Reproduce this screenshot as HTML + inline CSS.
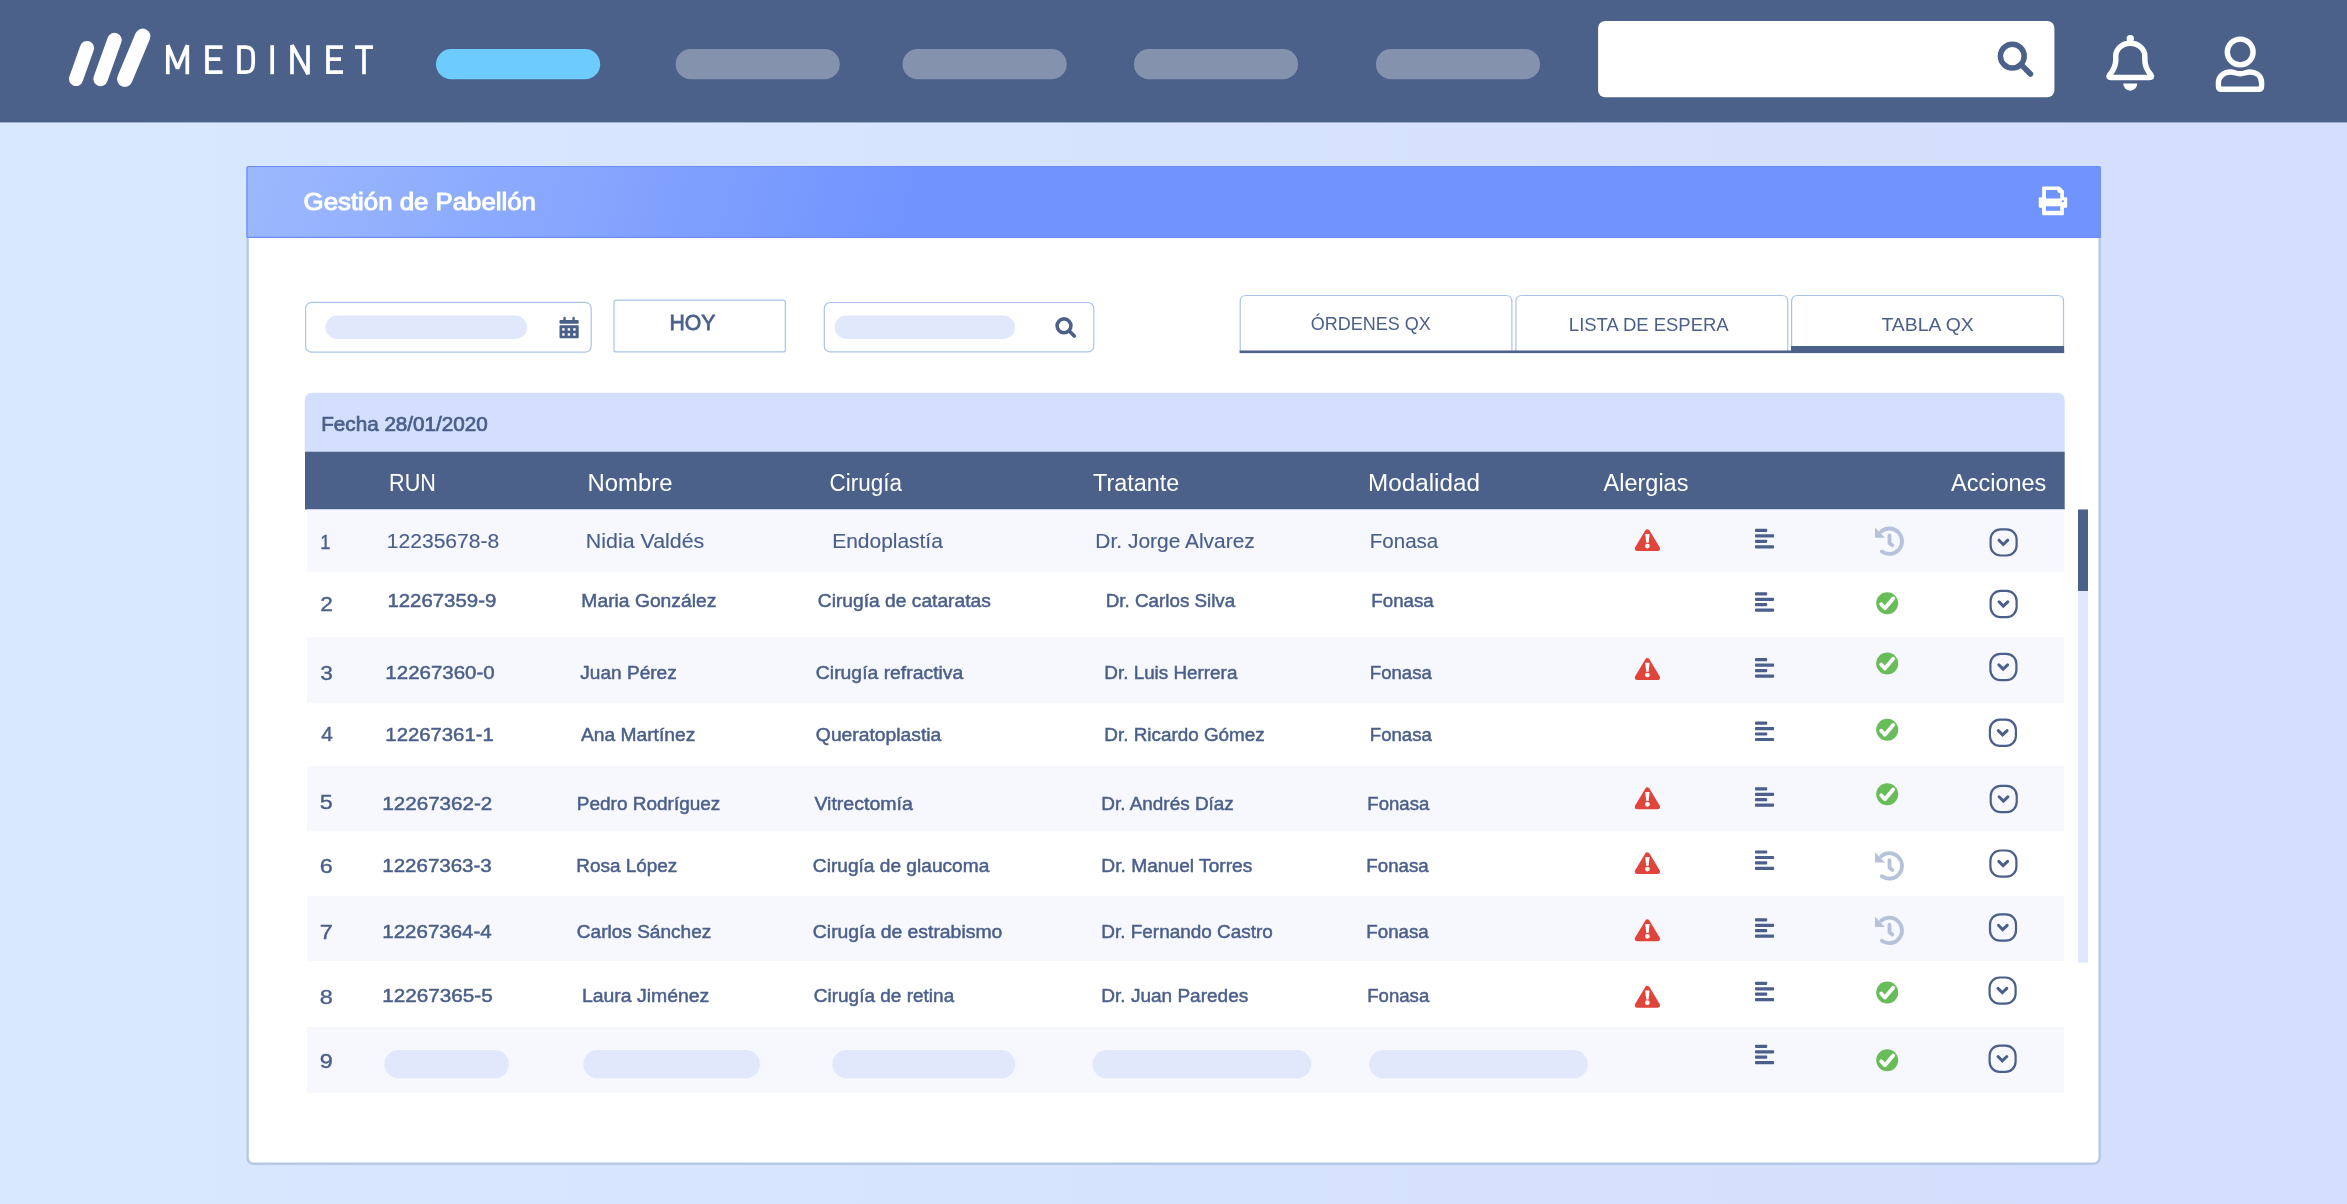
<!DOCTYPE html>
<html><head><meta charset="utf-8"><title>Medinet - Gestión de Pabellón</title>
<style>html,body{margin:0;padding:0;width:2347px;height:1204px;overflow:hidden;background:#d6e3fd;font-family:"Liberation Sans",sans-serif}svg{display:block;will-change:transform}</style>
</head><body>
<svg width="2347" height="1204" viewBox="0 0 2347 1204">
<defs>
<linearGradient id="bg" x1="0" y1="0" x2="1" y2="0">
 <stop offset="0" stop-color="#d8e8fe"/><stop offset="0.3" stop-color="#d7e5fe"/><stop offset="1" stop-color="#d4defd"/>
</linearGradient>
<linearGradient id="ch" gradientUnits="userSpaceOnUse" x1="247" y1="166" x2="880" y2="330">
 <stop offset="0" stop-color="#9cb8fd"/><stop offset="1" stop-color="#7193fe"/>
</linearGradient>
<clipPath id="tbl"><rect x="305" y="509.5" width="1760" height="584"/></clipPath>
</defs>
<rect x="0" y="0" width="2347" height="1204" fill="url(#bg)"/>
<rect x="0" y="0" width="2347" height="122.4" fill="#4b6189"/>
<g stroke="#ffffff" stroke-linecap="round" fill="none"><line x1="76" y1="79" x2="87" y2="48" stroke-width="14.2"/><line x1="100.5" y1="79" x2="114.5" y2="40" stroke-width="14.4"/><line x1="124.8" y1="79" x2="142.7" y2="36.3" stroke-width="15.5"/></g>
<g stroke="#ffffff" stroke-width="3.7" fill="none" stroke-linejoin="miter" stroke-miterlimit="1.5"><path d="M167.8 74.2 V45.2 L177.5 68.5 L187.3 45.2 V74.2"/><path d="M222.5 47.2 H207 V72.2 H222.5 M207 59.2 H220.3"/><path d="M239 47.2 V72.2 H246 C251.5 72.2 253.2 69 253.2 63 V56.5 C253.2 50.5 251.5 47.2 246 47.2 Z"/><path d="M272.2 45.2 V74.2"/><path d="M292 74.2 V45.2 L308 74.2 V45.2"/><path d="M343 47.2 H328 V72.2 H343 M328 59.2 H341"/><path d="M355 47.2 H373 M364 47.2 V74.2"/></g>
<rect x="436" y="49" width="164.2" height="30.3" rx="15.15" fill="#6ecbfd"/>
<rect x="675.6" y="49" width="164.2" height="30.3" rx="15.15" fill="#8492ae"/>
<rect x="902.5" y="49" width="164.2" height="30.3" rx="15.15" fill="#8492ae"/>
<rect x="1133.9" y="49" width="164.2" height="30.3" rx="15.15" fill="#8492ae"/>
<rect x="1375.9" y="49" width="164.2" height="30.3" rx="15.15" fill="#8492ae"/>
<rect x="1598.1" y="21" width="456.3" height="76.2" rx="7" fill="#ffffff"/>
<g stroke="#4b6189" fill="none" stroke-width="5.5" stroke-linecap="round"><circle cx="2012.3" cy="56.1" r="11.9"/><line x1="2022" y1="65.5" x2="2030.5" y2="74"/></g>
<g fill="none" stroke="#ffffff" stroke-width="5.5" stroke-linejoin="round"><path d="M2115.75 56 V60 C2115.75 68 2112 72 2109.5 75 Q2107.8 77.5 2111 77.5 H2149.5 Q2152.8 77.5 2151 75 C2148.5 72 2144.85 68 2144.85 60 V56 A14.55 12.8 0 0 0 2115.75 56 Z"/></g><circle cx="2130.3" cy="38.6" r="3.7" fill="#ffffff"/><path d="M2123.2 83.5 H2137.3 A7.05 7.2 0 0 1 2123.2 83.5 Z" fill="#ffffff"/>
<g fill="none" stroke="#ffffff" stroke-width="5.4" stroke-linejoin="round"><circle cx="2240.2" cy="52" r="12.9"/><path d="M2218.4 86 V83 C2218.4 76 2224 72 2231 72 C2234 72 2236 73.7 2240.2 73.7 C2244.4 73.7 2246.4 72 2249.4 72 C2256.4 72 2261.6 76 2261.6 83 V86 Q2261.6 89.3 2258.3 89.3 H2221.7 Q2218.4 89.3 2218.4 86 Z"/></g>
<rect x="247.65" y="170" width="1852" height="993.8" rx="6" fill="#ffffff" stroke="#b5c9e7" stroke-width="2.4"/>
<path d="M246.5 168 Q246.5 166 248.5 166 H2098.7 Q2100.7 166 2100.7 168 V237.8 H246.5 Z" fill="url(#ch)"/>
<path d="M247 237.3 V168 Q247 166.5 248.5 166.5 H2098.7 Q2100.2 166.5 2100.2 168 V237.3 H247" fill="none" stroke="#6b8cf0" stroke-width="1.2"/>
<g fill="#ffffff"><rect x="2038.8" y="197.3" width="28.4" height="10.5" rx="1"/><path d="M2042.1 199 V187.4 Q2042.1 186.4 2043.1 186.4 H2059.5 L2063.9 190.8 V199 Z"/><rect x="2042.1" y="205" width="21.8" height="10.2" rx="1"/></g><g fill="#7193fe"><path d="M2046 198.6 V189.9 H2057.3 Q2057.3 193 2060.2 193 V198.6 Z"/><rect x="2046" y="206.3" width="14.2" height="4.5"/><rect x="2061.8" y="200.3" width="2" height="1.8"/></g>
<rect x="305.6" y="302.4" width="285.6" height="49.7" rx="6" fill="#ffffff" stroke="#a9c3ea" stroke-width="1.2"/>
<rect x="325.5" y="315.5" width="201.5" height="23.4" rx="11.7" fill="#e2e8fc"/>
<g fill="#4b6189"><rect x="559.5" y="320.1" width="19.2" height="3.6" rx="0.8"/><rect x="559.5" y="325.3" width="19.2" height="13" rx="0.8"/><rect x="563.4" y="316.8" width="2.4" height="5" rx="1.2"/><rect x="572.4" y="316.8" width="2.4" height="5" rx="1.2"/></g>
<g fill="#ffffff"><rect x="562.2" y="328.2" width="2.4" height="2.4"/><rect x="562.2" y="333.3" width="2.4" height="2.4"/><rect x="567.7" y="328.2" width="2.4" height="2.4"/><rect x="567.7" y="333.3" width="2.4" height="2.4"/><rect x="573.2" y="328.2" width="2.4" height="2.4"/><rect x="573.2" y="333.3" width="2.4" height="2.4"/></g>
<rect x="614" y="300.1" width="171.3" height="51.8" rx="2" fill="#ffffff" stroke="#a9c3ea" stroke-width="1.2"/>
<rect x="824.3" y="302.5" width="269.5" height="49.4" rx="6" fill="#ffffff" stroke="#a9c3ea" stroke-width="1.2"/>
<rect x="834.7" y="315.4" width="180.3" height="23.5" rx="11.75" fill="#e2e8fc"/>
<g stroke="#4b6189" fill="none" stroke-width="3.6" stroke-linecap="round"><circle cx="1064.0" cy="325.8" r="6.9"/><line x1="1069.3" y1="331" x2="1074.3" y2="336"/></g>
<path d="M1240.2 352 V301.5 Q1240.2 295.5 1246.2 295.5 H1505.9 Q1511.9 295.5 1511.9 301.5 V352" fill="#ffffff" stroke="#a9c3ea" stroke-width="1.2"/>
<path d="M1515.9 352 V301.5 Q1515.9 295.5 1521.9 295.5 H1781.8 Q1787.8 295.5 1787.8 301.5 V352" fill="#ffffff" stroke="#a9c3ea" stroke-width="1.2"/>
<path d="M1791.6 352 V301.5 Q1791.6 295.5 1797.6 295.5 H2057.5 Q2063.5 295.5 2063.5 301.5 V352" fill="#ffffff" stroke="#a9c3ea" stroke-width="1.2"/>
<rect x="1239.6" y="350.5" width="824.5" height="2.6" fill="#4b6189"/>
<rect x="1791" y="346" width="273.1" height="7" fill="#4b6189"/>
<path d="M304.7 451.7 V400.8 Q304.7 392.8 312.7 392.8 H2056.7 Q2064.7 392.8 2064.7 400.8 V451.7 Z" fill="#d3dffd"/>
<rect x="305" y="451.7" width="1759.7" height="57.8" fill="#4b6189"/>
<rect x="307" y="509.5" width="1757" height="62.3" fill="#f7f8fe"/>
<rect x="307" y="637.2" width="1757" height="66.0" fill="#f7f8fe"/>
<rect x="307" y="766.3" width="1757" height="65.1" fill="#f7f8fe"/>
<rect x="307" y="895.8" width="1757" height="65.2" fill="#f7f8fe"/>
<rect x="307" y="1027.0" width="1757" height="65.8" fill="#f7f8fe"/>
<rect x="384.4" y="1050" width="124.4" height="28.3" rx="14.15" fill="#e2e8fc"/>
<rect x="583.3" y="1050" width="176.6" height="28.3" rx="14.15" fill="#e2e8fc"/>
<rect x="832.4" y="1050" width="182.9" height="28.3" rx="14.15" fill="#e2e8fc"/>
<rect x="1092.5" y="1050" width="218.7" height="28.3" rx="14.15" fill="#e2e8fc"/>
<rect x="1369.1" y="1050" width="218.7" height="28.3" rx="14.15" fill="#e2e8fc"/>
<rect x="2078" y="509.5" width="10" height="453.2" fill="#e2e8fb"/>
<rect x="2078" y="509.5" width="10" height="81.5" fill="#4b6189"/>
<g><path d="M1647.4 531.8 L1657.5 548.6 L1637.3 548.6 Z" fill="#e0443a" stroke="#e0443a" stroke-width="5" stroke-linejoin="round"/><path d="M1645.2 533.9 L1649.6 533.9 L1648.6 542.8 L1646.2 542.8 Z" fill="#ffffff"/><circle cx="1647.4" cy="546.1" r="2.35" fill="#ffffff"/></g>
<g fill="#4a5f8a"><rect x="1755.0" y="528.8" width="12.2" height="3.2" rx="0.8"/><rect x="1755.0" y="534.3" width="19.1" height="3.2" rx="0.8"/><rect x="1755.0" y="539.7" width="12.2" height="3.2" rx="0.8"/><rect x="1755.0" y="545.2" width="19.1" height="3.2" rx="0.8"/></g>
<g fill="none" stroke="#b5c2da" stroke-width="3.8" stroke-linecap="round"><path d="M1881.14 531.47 A12.7 12.7 0 1 1 1881.84 551.47"/><path d="M1889.5 535.5 V543 L1892.3 545.2" transform="translate(0 0.0)"/></g><path d="M1875 527.5 L1884.9 537.8 H1875 Z" fill="#b5c2da" transform="translate(0 0.0)"/>
<rect x="1990.6" y="529.3" width="26" height="26.2" rx="10" fill="none" stroke="#4a5f8a" stroke-width="2.2"/><path d="M1999.0 540.2 L2003.3 544.5 L2007.8 540.2" fill="none" stroke="#4a5f8a" stroke-width="3" stroke-linecap="round" stroke-linejoin="miter"/>
<g fill="#4a5f8a"><rect x="1755.0" y="592.2" width="12.2" height="3.2" rx="0.8"/><rect x="1755.0" y="597.7" width="19.1" height="3.2" rx="0.8"/><rect x="1755.0" y="603.1" width="12.2" height="3.2" rx="0.8"/><rect x="1755.0" y="608.6" width="19.1" height="3.2" rx="0.8"/></g>
<circle cx="1887.2" cy="603.2" r="11" fill="#68bd5a"/><path d="M1881.2 604.2 L1884.9 608.2 L1893.2 598.5" fill="none" stroke="#ffffff" stroke-width="3.8" stroke-linecap="round" stroke-linejoin="round"/>
<rect x="1990.6" y="590.9" width="26" height="26.2" rx="10" fill="none" stroke="#4a5f8a" stroke-width="2.2"/><path d="M1999.0 601.8 L2003.3 606.1 L2007.8 601.8" fill="none" stroke="#4a5f8a" stroke-width="3" stroke-linecap="round" stroke-linejoin="miter"/>
<g><path d="M1647.4 660.7 L1657.5 677.5 L1637.3 677.5 Z" fill="#e0443a" stroke="#e0443a" stroke-width="5" stroke-linejoin="round"/><path d="M1645.2 662.8 L1649.6 662.8 L1648.6 671.7 L1646.2 671.7 Z" fill="#ffffff"/><circle cx="1647.4" cy="675.0" r="2.35" fill="#ffffff"/></g>
<g fill="#4a5f8a"><rect x="1755.0" y="658.1" width="12.2" height="3.2" rx="0.8"/><rect x="1755.0" y="663.6" width="19.1" height="3.2" rx="0.8"/><rect x="1755.0" y="669.0" width="12.2" height="3.2" rx="0.8"/><rect x="1755.0" y="674.5" width="19.1" height="3.2" rx="0.8"/></g>
<circle cx="1887.2" cy="663.5" r="11" fill="#68bd5a"/><path d="M1881.2 664.5 L1884.9 668.5 L1893.2 658.8" fill="none" stroke="#ffffff" stroke-width="3.8" stroke-linecap="round" stroke-linejoin="round"/>
<rect x="1990.4" y="653.9" width="26" height="26.2" rx="10" fill="none" stroke="#4a5f8a" stroke-width="2.2"/><path d="M1998.8 664.8 L2003.1 669.1 L2007.6 664.8" fill="none" stroke="#4a5f8a" stroke-width="3" stroke-linecap="round" stroke-linejoin="miter"/>
<g fill="#4a5f8a"><rect x="1755.0" y="721.5" width="12.2" height="3.2" rx="0.8"/><rect x="1755.0" y="727.0" width="19.1" height="3.2" rx="0.8"/><rect x="1755.0" y="732.4" width="12.2" height="3.2" rx="0.8"/><rect x="1755.0" y="737.9" width="19.1" height="3.2" rx="0.8"/></g>
<circle cx="1887.2" cy="729.7" r="11" fill="#68bd5a"/><path d="M1881.2 730.7 L1884.9 734.7 L1893.2 725.0" fill="none" stroke="#ffffff" stroke-width="3.8" stroke-linecap="round" stroke-linejoin="round"/>
<rect x="1989.9" y="719.7" width="26" height="26.2" rx="10" fill="none" stroke="#4a5f8a" stroke-width="2.2"/><path d="M1998.3 730.6 L2002.6 734.9 L2007.1 730.6" fill="none" stroke="#4a5f8a" stroke-width="3" stroke-linecap="round" stroke-linejoin="miter"/>
<g><path d="M1647.4 790.0 L1657.5 806.8 L1637.3 806.8 Z" fill="#e0443a" stroke="#e0443a" stroke-width="5" stroke-linejoin="round"/><path d="M1645.2 792.1 L1649.6 792.1 L1648.6 801.0 L1646.2 801.0 Z" fill="#ffffff"/><circle cx="1647.4" cy="804.3" r="2.35" fill="#ffffff"/></g>
<g fill="#4a5f8a"><rect x="1755.0" y="787.2" width="12.2" height="3.2" rx="0.8"/><rect x="1755.0" y="792.7" width="19.1" height="3.2" rx="0.8"/><rect x="1755.0" y="798.1" width="12.2" height="3.2" rx="0.8"/><rect x="1755.0" y="803.6" width="19.1" height="3.2" rx="0.8"/></g>
<circle cx="1887.2" cy="794.3" r="11" fill="#68bd5a"/><path d="M1881.2 795.3 L1884.9 799.3 L1893.2 789.6" fill="none" stroke="#ffffff" stroke-width="3.8" stroke-linecap="round" stroke-linejoin="round"/>
<rect x="1990.7" y="785.9" width="26" height="26.2" rx="10" fill="none" stroke="#4a5f8a" stroke-width="2.2"/><path d="M1999.1 796.8 L2003.4 801.1 L2007.9 796.8" fill="none" stroke="#4a5f8a" stroke-width="3" stroke-linecap="round" stroke-linejoin="miter"/>
<g><path d="M1647.4 854.8 L1657.5 871.6 L1637.3 871.6 Z" fill="#e0443a" stroke="#e0443a" stroke-width="5" stroke-linejoin="round"/><path d="M1645.2 856.9 L1649.6 856.9 L1648.6 865.8 L1646.2 865.8 Z" fill="#ffffff"/><circle cx="1647.4" cy="869.1" r="2.35" fill="#ffffff"/></g>
<g fill="#4a5f8a"><rect x="1755.0" y="850.4" width="12.2" height="3.2" rx="0.8"/><rect x="1755.0" y="855.9" width="19.1" height="3.2" rx="0.8"/><rect x="1755.0" y="861.3" width="12.2" height="3.2" rx="0.8"/><rect x="1755.0" y="866.8" width="19.1" height="3.2" rx="0.8"/></g>
<g fill="none" stroke="#b5c2da" stroke-width="3.8" stroke-linecap="round"><path d="M1881.14 856.17 A12.7 12.7 0 1 1 1881.84 876.17"/><path d="M1889.5 535.5 V543 L1892.3 545.2" transform="translate(0 324.7)"/></g><path d="M1875 527.5 L1884.9 537.8 H1875 Z" fill="#b5c2da" transform="translate(0 324.7)"/>
<rect x="1990.4" y="850.5" width="26" height="26.2" rx="10" fill="none" stroke="#4a5f8a" stroke-width="2.2"/><path d="M1998.8 861.4 L2003.1 865.7 L2007.6 861.4" fill="none" stroke="#4a5f8a" stroke-width="3" stroke-linecap="round" stroke-linejoin="miter"/>
<g><path d="M1647.4 922.0 L1657.5 938.8 L1637.3 938.8 Z" fill="#e0443a" stroke="#e0443a" stroke-width="5" stroke-linejoin="round"/><path d="M1645.2 924.1 L1649.6 924.1 L1648.6 933.0 L1646.2 933.0 Z" fill="#ffffff"/><circle cx="1647.4" cy="936.3" r="2.35" fill="#ffffff"/></g>
<g fill="#4a5f8a"><rect x="1755.0" y="918.2" width="12.2" height="3.2" rx="0.8"/><rect x="1755.0" y="923.7" width="19.1" height="3.2" rx="0.8"/><rect x="1755.0" y="929.1" width="12.2" height="3.2" rx="0.8"/><rect x="1755.0" y="934.6" width="19.1" height="3.2" rx="0.8"/></g>
<g fill="none" stroke="#b5c2da" stroke-width="3.8" stroke-linecap="round"><path d="M1881.14 920.67 A12.7 12.7 0 1 1 1881.84 940.67"/><path d="M1889.5 535.5 V543 L1892.3 545.2" transform="translate(0 389.2)"/></g><path d="M1875 527.5 L1884.9 537.8 H1875 Z" fill="#b5c2da" transform="translate(0 389.2)"/>
<rect x="1990.0" y="914.4" width="26" height="26.2" rx="10" fill="none" stroke="#4a5f8a" stroke-width="2.2"/><path d="M1998.4 925.3 L2002.7 929.6 L2007.2 925.3" fill="none" stroke="#4a5f8a" stroke-width="3" stroke-linecap="round" stroke-linejoin="miter"/>
<g><path d="M1647.4 988.4 L1657.5 1005.2 L1637.3 1005.2 Z" fill="#e0443a" stroke="#e0443a" stroke-width="5" stroke-linejoin="round"/><path d="M1645.2 990.5 L1649.6 990.5 L1648.6 999.4 L1646.2 999.4 Z" fill="#ffffff"/><circle cx="1647.4" cy="1002.7" r="2.35" fill="#ffffff"/></g>
<g fill="#4a5f8a"><rect x="1755.0" y="981.7" width="12.2" height="3.2" rx="0.8"/><rect x="1755.0" y="987.2" width="19.1" height="3.2" rx="0.8"/><rect x="1755.0" y="992.6" width="12.2" height="3.2" rx="0.8"/><rect x="1755.0" y="998.1" width="19.1" height="3.2" rx="0.8"/></g>
<circle cx="1887.2" cy="992.5" r="11" fill="#68bd5a"/><path d="M1881.2 993.5 L1884.9 997.5 L1893.2 987.8" fill="none" stroke="#ffffff" stroke-width="3.8" stroke-linecap="round" stroke-linejoin="round"/>
<rect x="1989.6" y="977.5" width="26" height="26.2" rx="10" fill="none" stroke="#4a5f8a" stroke-width="2.2"/><path d="M1998.0 988.4 L2002.3 992.7 L2006.8 988.4" fill="none" stroke="#4a5f8a" stroke-width="3" stroke-linecap="round" stroke-linejoin="miter"/>
<g fill="#4a5f8a"><rect x="1755.0" y="1044.7" width="12.2" height="3.2" rx="0.8"/><rect x="1755.0" y="1050.2" width="19.1" height="3.2" rx="0.8"/><rect x="1755.0" y="1055.6" width="12.2" height="3.2" rx="0.8"/><rect x="1755.0" y="1061.0" width="19.1" height="3.2" rx="0.8"/></g>
<circle cx="1887.2" cy="1060.3" r="11" fill="#68bd5a"/><path d="M1881.2 1061.3 L1884.9 1065.3 L1893.2 1055.6" fill="none" stroke="#ffffff" stroke-width="3.8" stroke-linecap="round" stroke-linejoin="round"/>
<rect x="1989.6" y="1045.6" width="26" height="26.2" rx="10" fill="none" stroke="#4a5f8a" stroke-width="2.2"/><path d="M1998.0 1056.5 L2002.3 1060.8 L2006.8 1056.5" fill="none" stroke="#4a5f8a" stroke-width="3" stroke-linecap="round" stroke-linejoin="miter"/>
<g font-family="Liberation Sans, sans-serif">
<text x="303.59" y="210.30" font-size="24.80" font-weight="normal" fill="#ffffff" stroke="#ffffff" stroke-width="1.00" textLength="232.36" lengthAdjust="spacingAndGlyphs">Gestión de Pabellón</text>
<text x="669.38" y="330.40" font-size="22.40" font-weight="normal" fill="#4a5f8a" stroke="#4a5f8a" stroke-width="0.80" textLength="45.96" lengthAdjust="spacingAndGlyphs">HOY</text>
<text x="1310.83" y="330.30" font-size="18.80" font-weight="normal" fill="#4a5f8a" textLength="119.92" lengthAdjust="spacingAndGlyphs">ÓRDENES QX</text>
<text x="1568.87" y="330.50" font-size="18.80" font-weight="normal" fill="#4a5f8a" textLength="159.80" lengthAdjust="spacingAndGlyphs">LISTA DE ESPERA</text>
<text x="1881.43" y="330.50" font-size="18.80" font-weight="normal" fill="#4a5f8a" textLength="92.36" lengthAdjust="spacingAndGlyphs">TABLA QX</text>
<text x="321.24" y="431.20" font-size="19.30" font-weight="normal" fill="#4a5f8a" stroke="#4a5f8a" stroke-width="0.70" textLength="166.53" lengthAdjust="spacingAndGlyphs">Fecha 28/01/2020</text>
<text x="389.12" y="491.00" font-size="23.30" font-weight="normal" fill="#ffffff" textLength="46.77" lengthAdjust="spacingAndGlyphs">RUN</text>
<text x="587.60" y="491.00" font-size="23.30" font-weight="normal" fill="#ffffff" textLength="84.89" lengthAdjust="spacingAndGlyphs">Nombre</text>
<text x="829.56" y="491.00" font-size="23.30" font-weight="normal" fill="#ffffff" textLength="72.41" lengthAdjust="spacingAndGlyphs">Cirugía</text>
<text x="1093.12" y="491.00" font-size="23.30" font-weight="normal" fill="#ffffff" textLength="86.21" lengthAdjust="spacingAndGlyphs">Tratante</text>
<text x="1368.08" y="491.00" font-size="23.30" font-weight="normal" fill="#ffffff" textLength="111.81" lengthAdjust="spacingAndGlyphs">Modalidad</text>
<text x="1603.60" y="491.00" font-size="23.30" font-weight="normal" fill="#ffffff" textLength="84.81" lengthAdjust="spacingAndGlyphs">Alergias</text>
<text x="1951.04" y="491.00" font-size="23.30" font-weight="normal" fill="#ffffff" textLength="95.33" lengthAdjust="spacingAndGlyphs">Acciones</text>
<text x="386.75" y="548.00" font-size="20.10" font-weight="normal" fill="#4a5f8a" stroke="#4a5f8a" stroke-width="0.15" textLength="112.53" lengthAdjust="spacingAndGlyphs">12235678-8</text>
<text x="585.87" y="548.00" font-size="20.10" font-weight="normal" fill="#4a5f8a" stroke="#4a5f8a" stroke-width="0.15" textLength="118.41" lengthAdjust="spacingAndGlyphs">Nidia Valdés</text>
<text x="832.27" y="548.00" font-size="20.10" font-weight="normal" fill="#4a5f8a" stroke="#4a5f8a" stroke-width="0.15" textLength="110.57" lengthAdjust="spacingAndGlyphs">Endoplastía</text>
<text x="1095.39" y="548.00" font-size="20.10" font-weight="normal" fill="#4a5f8a" stroke="#4a5f8a" stroke-width="0.15" textLength="159.41" lengthAdjust="spacingAndGlyphs">Dr. Jorge Alvarez</text>
<text x="1369.75" y="548.00" font-size="20.10" font-weight="normal" fill="#4a5f8a" stroke="#4a5f8a" stroke-width="0.15" textLength="68.53" lengthAdjust="spacingAndGlyphs">Fonasa</text>
<text x="387.41" y="606.50" font-size="19.20" font-weight="normal" fill="#4a5f8a" stroke="#4a5f8a" stroke-width="0.50" textLength="108.88" lengthAdjust="spacingAndGlyphs">12267359-9</text>
<text x="581.37" y="606.50" font-size="19.20" font-weight="normal" fill="#4a5f8a" stroke="#4a5f8a" stroke-width="0.50" textLength="134.96" lengthAdjust="spacingAndGlyphs">Maria González</text>
<text x="817.81" y="606.50" font-size="19.20" font-weight="normal" fill="#4a5f8a" stroke="#4a5f8a" stroke-width="0.50" textLength="173.00" lengthAdjust="spacingAndGlyphs">Cirugía de cataratas</text>
<text x="1105.81" y="606.50" font-size="19.20" font-weight="normal" fill="#4a5f8a" stroke="#4a5f8a" stroke-width="0.50" textLength="129.40" lengthAdjust="spacingAndGlyphs">Dr. Carlos Silva</text>
<text x="1371.37" y="606.50" font-size="19.20" font-weight="normal" fill="#4a5f8a" stroke="#4a5f8a" stroke-width="0.50" textLength="62.40" lengthAdjust="spacingAndGlyphs">Fonasa</text>
<text x="385.37" y="679.00" font-size="19.20" font-weight="normal" fill="#4a5f8a" stroke="#4a5f8a" stroke-width="0.50" textLength="109.36" lengthAdjust="spacingAndGlyphs">12267360-0</text>
<text x="580.29" y="679.00" font-size="19.20" font-weight="normal" fill="#4a5f8a" stroke="#4a5f8a" stroke-width="0.50" textLength="96.48" lengthAdjust="spacingAndGlyphs">Juan Pérez</text>
<text x="815.89" y="679.00" font-size="19.20" font-weight="normal" fill="#4a5f8a" stroke="#4a5f8a" stroke-width="0.50" textLength="147.40" lengthAdjust="spacingAndGlyphs">Cirugía refractiva</text>
<text x="1104.33" y="679.00" font-size="19.20" font-weight="normal" fill="#4a5f8a" stroke="#4a5f8a" stroke-width="0.50" textLength="133.04" lengthAdjust="spacingAndGlyphs">Dr. Luis Herrera</text>
<text x="1369.81" y="679.00" font-size="19.20" font-weight="normal" fill="#4a5f8a" stroke="#4a5f8a" stroke-width="0.50" textLength="61.96" lengthAdjust="spacingAndGlyphs">Fonasa</text>
<text x="385.37" y="741.30" font-size="19.20" font-weight="normal" fill="#4a5f8a" stroke="#4a5f8a" stroke-width="0.50" textLength="108.40" lengthAdjust="spacingAndGlyphs">12267361-1</text>
<text x="580.89" y="741.30" font-size="19.20" font-weight="normal" fill="#4a5f8a" stroke="#4a5f8a" stroke-width="0.50" textLength="114.44" lengthAdjust="spacingAndGlyphs">Ana Martínez</text>
<text x="815.89" y="741.30" font-size="19.20" font-weight="normal" fill="#4a5f8a" stroke="#4a5f8a" stroke-width="0.50" textLength="125.44" lengthAdjust="spacingAndGlyphs">Queratoplastia</text>
<text x="1104.33" y="741.30" font-size="19.20" font-weight="normal" fill="#4a5f8a" stroke="#4a5f8a" stroke-width="0.50" textLength="160.40" lengthAdjust="spacingAndGlyphs">Dr. Ricardo Gómez</text>
<text x="1369.81" y="741.30" font-size="19.20" font-weight="normal" fill="#4a5f8a" stroke="#4a5f8a" stroke-width="0.50" textLength="61.96" lengthAdjust="spacingAndGlyphs">Fonasa</text>
<text x="382.33" y="810.00" font-size="19.20" font-weight="normal" fill="#4a5f8a" stroke="#4a5f8a" stroke-width="0.50" textLength="109.96" lengthAdjust="spacingAndGlyphs">12267362-2</text>
<text x="576.85" y="810.00" font-size="19.20" font-weight="normal" fill="#4a5f8a" stroke="#4a5f8a" stroke-width="0.50" textLength="143.48" lengthAdjust="spacingAndGlyphs">Pedro Rodríguez</text>
<text x="814.41" y="810.00" font-size="19.20" font-weight="normal" fill="#4a5f8a" stroke="#4a5f8a" stroke-width="0.50" textLength="98.48" lengthAdjust="spacingAndGlyphs">Vitrectomía</text>
<text x="1101.33" y="810.00" font-size="19.20" font-weight="normal" fill="#4a5f8a" stroke="#4a5f8a" stroke-width="0.50" textLength="132.44" lengthAdjust="spacingAndGlyphs">Dr. Andrés Díaz</text>
<text x="1367.37" y="810.00" font-size="19.20" font-weight="normal" fill="#4a5f8a" stroke="#4a5f8a" stroke-width="0.50" textLength="61.88" lengthAdjust="spacingAndGlyphs">Fonasa</text>
<text x="382.33" y="872.20" font-size="19.20" font-weight="normal" fill="#4a5f8a" stroke="#4a5f8a" stroke-width="0.50" textLength="109.40" lengthAdjust="spacingAndGlyphs">12267363-3</text>
<text x="576.25" y="872.20" font-size="19.20" font-weight="normal" fill="#4a5f8a" stroke="#4a5f8a" stroke-width="0.50" textLength="101.08" lengthAdjust="spacingAndGlyphs">Rosa López</text>
<text x="812.85" y="872.20" font-size="19.20" font-weight="normal" fill="#4a5f8a" stroke="#4a5f8a" stroke-width="0.50" textLength="176.44" lengthAdjust="spacingAndGlyphs">Cirugía de glaucoma</text>
<text x="1101.33" y="872.20" font-size="19.20" font-weight="normal" fill="#4a5f8a" stroke="#4a5f8a" stroke-width="0.50" textLength="151.00" lengthAdjust="spacingAndGlyphs">Dr. Manuel Torres</text>
<text x="1366.37" y="872.20" font-size="19.20" font-weight="normal" fill="#4a5f8a" stroke="#4a5f8a" stroke-width="0.50" textLength="62.36" lengthAdjust="spacingAndGlyphs">Fonasa</text>
<text x="382.33" y="938.40" font-size="19.20" font-weight="normal" fill="#4a5f8a" stroke="#4a5f8a" stroke-width="0.50" textLength="109.36" lengthAdjust="spacingAndGlyphs">12267364-4</text>
<text x="576.85" y="938.40" font-size="19.20" font-weight="normal" fill="#4a5f8a" stroke="#4a5f8a" stroke-width="0.50" textLength="134.40" lengthAdjust="spacingAndGlyphs">Carlos Sánchez</text>
<text x="812.85" y="938.40" font-size="19.20" font-weight="normal" fill="#4a5f8a" stroke="#4a5f8a" stroke-width="0.50" textLength="189.44" lengthAdjust="spacingAndGlyphs">Cirugía de estrabismo</text>
<text x="1101.33" y="938.40" font-size="19.20" font-weight="normal" fill="#4a5f8a" stroke="#4a5f8a" stroke-width="0.50" textLength="171.44" lengthAdjust="spacingAndGlyphs">Dr. Fernando Castro</text>
<text x="1366.37" y="938.40" font-size="19.20" font-weight="normal" fill="#4a5f8a" stroke="#4a5f8a" stroke-width="0.50" textLength="62.36" lengthAdjust="spacingAndGlyphs">Fonasa</text>
<text x="382.33" y="1002.20" font-size="19.20" font-weight="normal" fill="#4a5f8a" stroke="#4a5f8a" stroke-width="0.50" textLength="110.36" lengthAdjust="spacingAndGlyphs">12267365-5</text>
<text x="581.93" y="1002.20" font-size="19.20" font-weight="normal" fill="#4a5f8a" stroke="#4a5f8a" stroke-width="0.50" textLength="127.40" lengthAdjust="spacingAndGlyphs">Laura Jiménez</text>
<text x="813.81" y="1002.20" font-size="19.20" font-weight="normal" fill="#4a5f8a" stroke="#4a5f8a" stroke-width="0.50" textLength="140.40" lengthAdjust="spacingAndGlyphs">Cirugía de retina</text>
<text x="1101.33" y="1002.20" font-size="19.20" font-weight="normal" fill="#4a5f8a" stroke="#4a5f8a" stroke-width="0.50" textLength="146.92" lengthAdjust="spacingAndGlyphs">Dr. Juan Paredes</text>
<text x="1367.25" y="1002.20" font-size="19.20" font-weight="normal" fill="#4a5f8a" stroke="#4a5f8a" stroke-width="0.50" textLength="62.00" lengthAdjust="spacingAndGlyphs">Fonasa</text>
<text x="320.21" y="549.40" font-size="20.50" font-weight="normal" fill="#4a5f8a" stroke="#4a5f8a" stroke-width="0.40" textLength="10.17" lengthAdjust="spacingAndGlyphs">1</text>
<text x="320.21" y="610.50" font-size="20.50" font-weight="normal" fill="#4a5f8a" stroke="#4a5f8a" stroke-width="0.40" textLength="12.61" lengthAdjust="spacingAndGlyphs">2</text>
<text x="320.21" y="680.00" font-size="20.50" font-weight="normal" fill="#4a5f8a" stroke="#4a5f8a" stroke-width="0.40" textLength="12.61" lengthAdjust="spacingAndGlyphs">3</text>
<text x="321.21" y="741.40" font-size="20.50" font-weight="normal" fill="#4a5f8a" stroke="#4a5f8a" stroke-width="0.40" textLength="11.61" lengthAdjust="spacingAndGlyphs">4</text>
<text x="319.77" y="809.00" font-size="20.50" font-weight="normal" fill="#4a5f8a" stroke="#4a5f8a" stroke-width="0.40" textLength="13.01" lengthAdjust="spacingAndGlyphs">5</text>
<text x="319.77" y="872.80" font-size="20.50" font-weight="normal" fill="#4a5f8a" stroke="#4a5f8a" stroke-width="0.40" textLength="13.01" lengthAdjust="spacingAndGlyphs">6</text>
<text x="319.77" y="938.60" font-size="20.50" font-weight="normal" fill="#4a5f8a" stroke="#4a5f8a" stroke-width="0.40" textLength="13.01" lengthAdjust="spacingAndGlyphs">7</text>
<text x="319.77" y="1003.90" font-size="20.50" font-weight="normal" fill="#4a5f8a" stroke="#4a5f8a" stroke-width="0.40" textLength="13.01" lengthAdjust="spacingAndGlyphs">8</text>
<text x="319.77" y="1068.00" font-size="20.50" font-weight="normal" fill="#4a5f8a" stroke="#4a5f8a" stroke-width="0.40" textLength="13.01" lengthAdjust="spacingAndGlyphs">9</text>
</g>
</svg>
</body></html>
